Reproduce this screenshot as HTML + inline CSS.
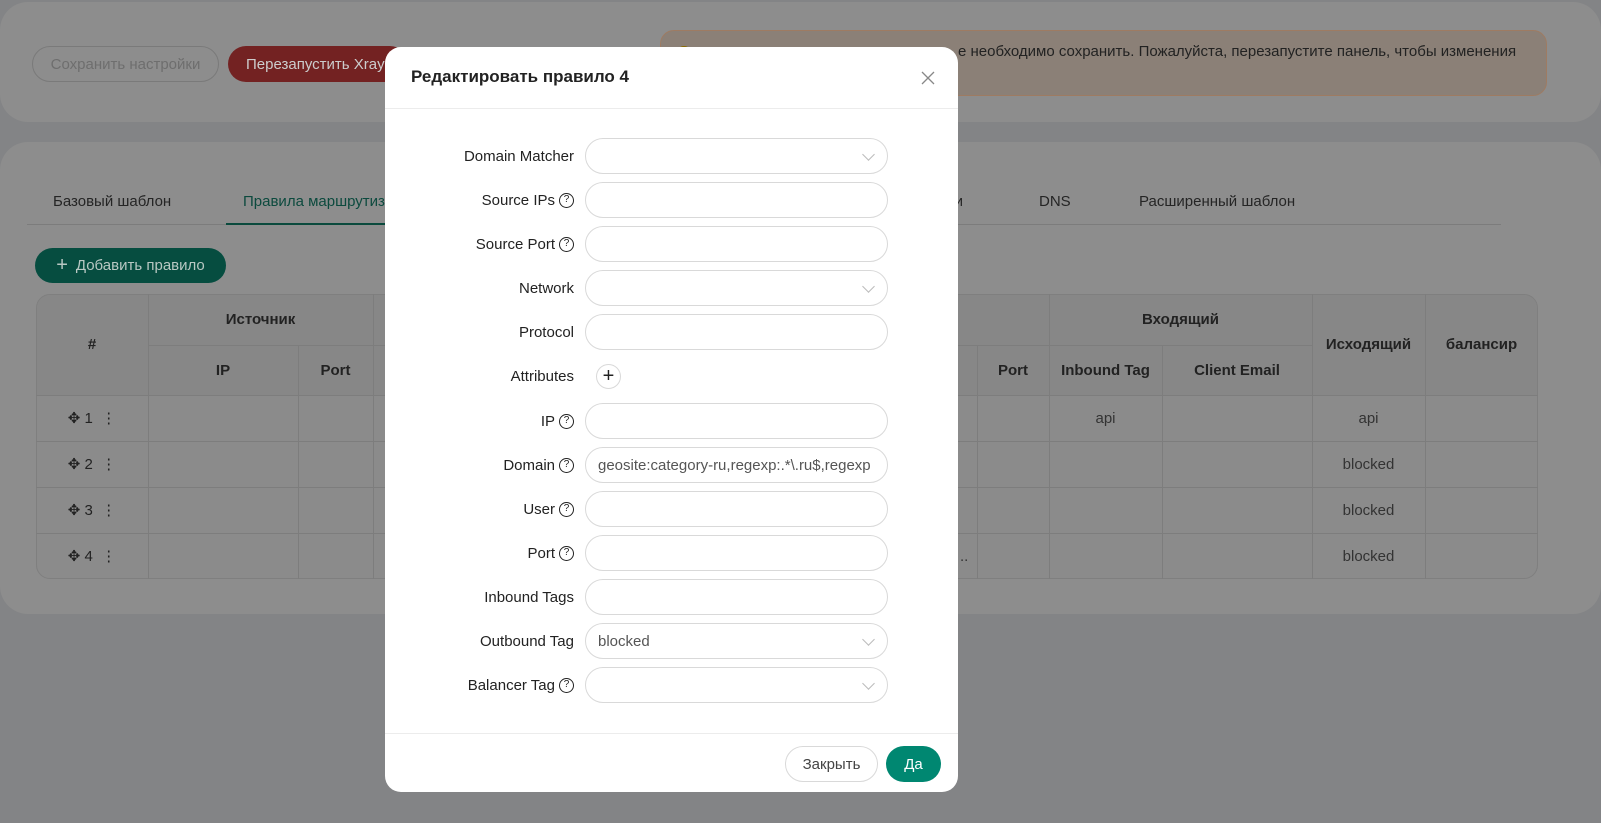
<!DOCTYPE html>
<html><head><meta charset="utf-8"><style>
*{box-sizing:border-box;margin:0;padding:0}
body{width:1601px;height:823px;overflow:hidden;background:#838486;font-family:"Liberation Sans","Noto Sans CJK SC",sans-serif;font-size:15px;color:#222;position:relative}
.a{position:absolute}
.card{background:#8d8d8d;border-radius:28px}
.btn{border-radius:18px;display:flex;align-items:center;justify-content:center;font-size:15px}
.t{position:absolute;border-color:#7d7d7d;border-style:solid;border-width:0}
.c{position:absolute;display:flex;align-items:center;justify-content:center;font-size:15px;color:#222}
.h{font-weight:bold}
.modal{position:absolute;left:385px;top:47px;width:573px;height:745px;background:#fff;border-radius:16px}
.lbl{position:absolute;right:384px;font-size:15px;color:#222;display:flex;align-items:center;height:36px;white-space:nowrap}
.q{display:inline-block;width:15px;height:15px;border:1.3px solid #222;border-radius:50%;font-size:10px;line-height:12px;text-align:center;margin-left:4px}
.in{position:absolute;left:200px;width:303px;height:36px;border:1px solid #d9d9d9;border-radius:18px;font-size:15px;color:#555;padding-left:12px;display:flex;align-items:center;white-space:nowrap;overflow:hidden}
.chev{position:absolute;right:14px;top:11px;width:9px;height:9px;border-right:1px solid #bbb;border-bottom:1px solid #bbb;transform:rotate(45deg)}
</style></head><body>
<div class="a card" style="left:0;top:2px;width:1601px;height:120px;"></div>
<div class="a btn" style="left:32px;top:46px;width:187px;height:36px;border:1px solid #7a7a7a;color:#6e6e6e">Сохранить настройки</div>
<div class="a btn" style="left:228px;top:46px;width:180px;height:36px;background:#732222;color:#ccc;justify-content:flex-start;padding-left:18px">Перезапустить Xray</div>
<div class="a" style="left:660px;top:30px;width:887px;height:66px;background:#8b8077;border:1px solid #9e7b62;border-radius:14px"></div>
<div class="a" style="left:676px;top:46px;width:16px;height:16px;border-radius:50%;background:#8a6a00"></div>
<div class="a" style="left:958px;top:43px;font-size:15px;color:#222">е необходимо сохранить. Пожалуйста, перезапустите панель, чтобы изменения</div>
<div class="a card" style="left:0;top:142px;width:1601px;height:472px;"></div>
<div class="a" style="left:53px;top:193px;color:#252525">Базовый шаблон</div>
<div class="a" style="left:243px;top:193px;color:#0c4a3e">Правила маршрутиз</div>
<div class="a" style="left:27px;top:224px;width:1474px;height:1px;background:#7c7c7c"></div>
<div class="a" style="left:226px;top:223px;width:160px;height:2px;background:#0a4a3d"></div>
<div class="a" style="left:948px;top:193px;color:#252525">ки</div>
<div class="a" style="left:1039px;top:193px;color:#252525">DNS</div>
<div class="a" style="left:1139px;top:193px;color:#252525">Расширенный шаблон</div>
<div class="a btn" style="left:35px;top:248px;width:191px;height:35px;background:#064d40;color:#b8c8c3"><span style="font-size:20px;margin-right:8px">+</span>Добавить правило</div>
<div class="a" style="left:36px;top:294px;width:1502px;height:285px;border:1px solid #7f7f7f;border-radius:14px;background:#8b8b8b;overflow:hidden">
<div style="position:absolute;left:0;top:0;width:100%;height:101px;background:#878787"></div>
</div>
<div class="t" style="left:36px;top:395px;width:1502px;border-top-width:1px"></div>
<div class="t" style="left:36px;top:441px;width:1502px;border-top-width:1px"></div>
<div class="t" style="left:36px;top:487px;width:1502px;border-top-width:1px"></div>
<div class="t" style="left:36px;top:533px;width:1502px;border-top-width:1px"></div>
<div class="t" style="left:148px;top:345px;width:1164px;border-top-width:1px"></div>
<div class="t" style="left:148px;top:294px;height:285px;border-left-width:1px"></div>
<div class="t" style="left:298px;top:345px;height:234px;border-left-width:1px"></div>
<div class="t" style="left:373px;top:294px;height:285px;border-left-width:1px"></div>
<div class="t" style="left:977px;top:345px;height:234px;border-left-width:1px"></div>
<div class="t" style="left:1049px;top:294px;height:285px;border-left-width:1px"></div>
<div class="t" style="left:1162px;top:345px;height:234px;border-left-width:1px"></div>
<div class="t" style="left:1312px;top:294px;height:285px;border-left-width:1px"></div>
<div class="t" style="left:1425px;top:294px;height:285px;border-left-width:1px"></div>
<div class="c h" style="left:36px;top:294px;width:112px;height:101px">#</div>
<div class="c h" style="left:148px;top:294px;width:225px;height:51px">Источник</div>
<div class="c h" style="left:148px;top:345px;width:150px;height:50px">IP</div>
<div class="c h" style="left:298px;top:345px;width:75px;height:50px">Port</div>
<div class="c h" style="left:977px;top:345px;width:72px;height:50px">Port</div>
<div class="c h" style="left:1049px;top:294px;width:263px;height:51px">Входящий</div>
<div class="c h" style="left:1049px;top:345px;width:113px;height:50px">Inbound Tag</div>
<div class="c h" style="left:1162px;top:345px;width:150px;height:50px">Client Email</div>
<div class="c h" style="left:1312px;top:294px;width:113px;height:101px">Исходящий</div>
<div class="c h" style="left:1425px;top:294px;width:113px;height:101px">балансир</div>
<div class="c" style="left:36px;top:395px;width:112px;height:46px">✥ 1 &nbsp;⋮</div>
<div class="c" style="left:36px;top:441px;width:112px;height:46px">✥ 2 &nbsp;⋮</div>
<div class="c" style="left:36px;top:487px;width:112px;height:46px">✥ 3 &nbsp;⋮</div>
<div class="c" style="left:36px;top:533px;width:112px;height:46px">✥ 4 &nbsp;⋮</div>
<div class="c" style="left:1049px;top:395px;width:113px;height:46px;color:#333">api</div>
<div class="c" style="left:1312px;top:395px;width:113px;height:46px;color:#333">api</div>
<div class="c" style="left:1312px;top:441px;width:113px;height:46px;color:#333">blocked</div>
<div class="c" style="left:1312px;top:487px;width:113px;height:46px;color:#333">blocked</div>
<div class="c" style="left:1312px;top:533px;width:113px;height:46px;color:#333">blocked</div>
<div class="a" style="left:960px;top:548px;color:#333">..</div>
<div class="modal">
<div class="a" style="left:26px;top:20px;font-size:17px;font-weight:bold;color:#222">Редактировать правило 4</div>
<svg class="a" style="left:536px;top:24px" width="14" height="14" viewBox="0 0 14 14"><path d="M1 1L13 13M13 1L1 13" stroke="#888" stroke-width="1.3"/></svg>
<div class="a" style="left:0;top:61px;width:573px;height:1px;background:#ececec"></div>
<div class="lbl" style="top:91px">Domain Matcher</div><div class="in" style="top:91px"><span class="chev"></span></div>
<div class="lbl" style="top:135px">Source IPs<span class="q">?</span></div><div class="in" style="top:135px"></div>
<div class="lbl" style="top:179px">Source Port<span class="q">?</span></div><div class="in" style="top:179px"></div>
<div class="lbl" style="top:223px">Network</div><div class="in" style="top:223px"><span class="chev"></span></div>
<div class="lbl" style="top:267px">Protocol</div><div class="in" style="top:267px"></div>
<div class="lbl" style="top:311px">Attributes</div>
<div class="a" style="left:211px;top:317px;width:25px;height:25px;border:1px solid #d9d9d9;border-radius:50%;text-align:center;line-height:22px;font-size:20px;color:#222">+</div>
<div class="lbl" style="top:356px">IP<span class="q">?</span></div><div class="in" style="top:356px"></div>
<div class="lbl" style="top:400px">Domain<span class="q">?</span></div><div class="in" style="top:400px">geosite:category-ru,regexp:.*\.ru$,regexp</div>
<div class="lbl" style="top:444px">User<span class="q">?</span></div><div class="in" style="top:444px"></div>
<div class="lbl" style="top:488px">Port<span class="q">?</span></div><div class="in" style="top:488px"></div>
<div class="lbl" style="top:532px">Inbound Tags</div><div class="in" style="top:532px"></div>
<div class="lbl" style="top:576px">Outbound Tag</div><div class="in" style="top:576px">blocked<span class="chev"></span></div>
<div class="lbl" style="top:620px">Balancer Tag<span class="q">?</span></div><div class="in" style="top:620px"><span class="chev"></span></div>
<div class="a" style="left:0;top:686px;width:573px;height:1px;background:#ececec"></div>
<div class="a btn" style="left:400px;top:699px;width:93px;height:36px;border:1px solid #d9d9d9;color:#444">Закрыть</div>
<div class="a btn" style="left:501px;top:699px;width:55px;height:36px;background:#008771;color:#fff">Да</div>
</div>
</body></html>
